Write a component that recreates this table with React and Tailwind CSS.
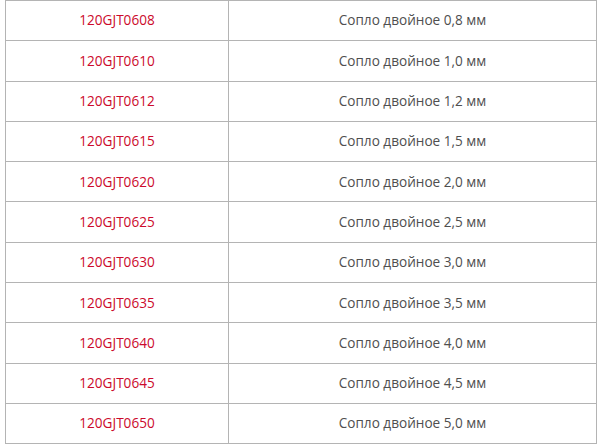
import React from 'react'

const rows = [
  ['120GJT0608', '0,8'],
  ['120GJT0610', '1,0'],
  ['120GJT0612', '1,2'],
  ['120GJT0615', '1,5'],
  ['120GJT0620', '2,0'],
  ['120GJT0625', '2,5'],
  ['120GJT0630', '3,0'],
  ['120GJT0635', '3,5'],
  ['120GJT0640', '4,0'],
  ['120GJT0645', '4,5'],
  ['120GJT0650', '5,0'],
]

export default function App() {
  return (
    <div className="w-[598px] h-[446px] bg-white pl-[5px]" style={{ fontFamily: '"Open Sans", "Noto Sans", sans-serif' }}>
      <table className="w-[592px] border-collapse text-[13.6px]">
        <tbody>
          {rows.map(([code, size]) => (
            <tr key={code} className="h-[40.3px]">
              <td className="w-[223px] border border-[#b4b4b4] text-center align-middle text-[#cc0a2c] p-0">
                {code}
              </td>
              <td className="border border-[#b4b4b4] text-center align-middle text-[#4f4f4f] p-0">
                Сопло двойное {size} мм
              </td>
            </tr>
          ))}
        </tbody>
      </table>
    </div>
  )
}
